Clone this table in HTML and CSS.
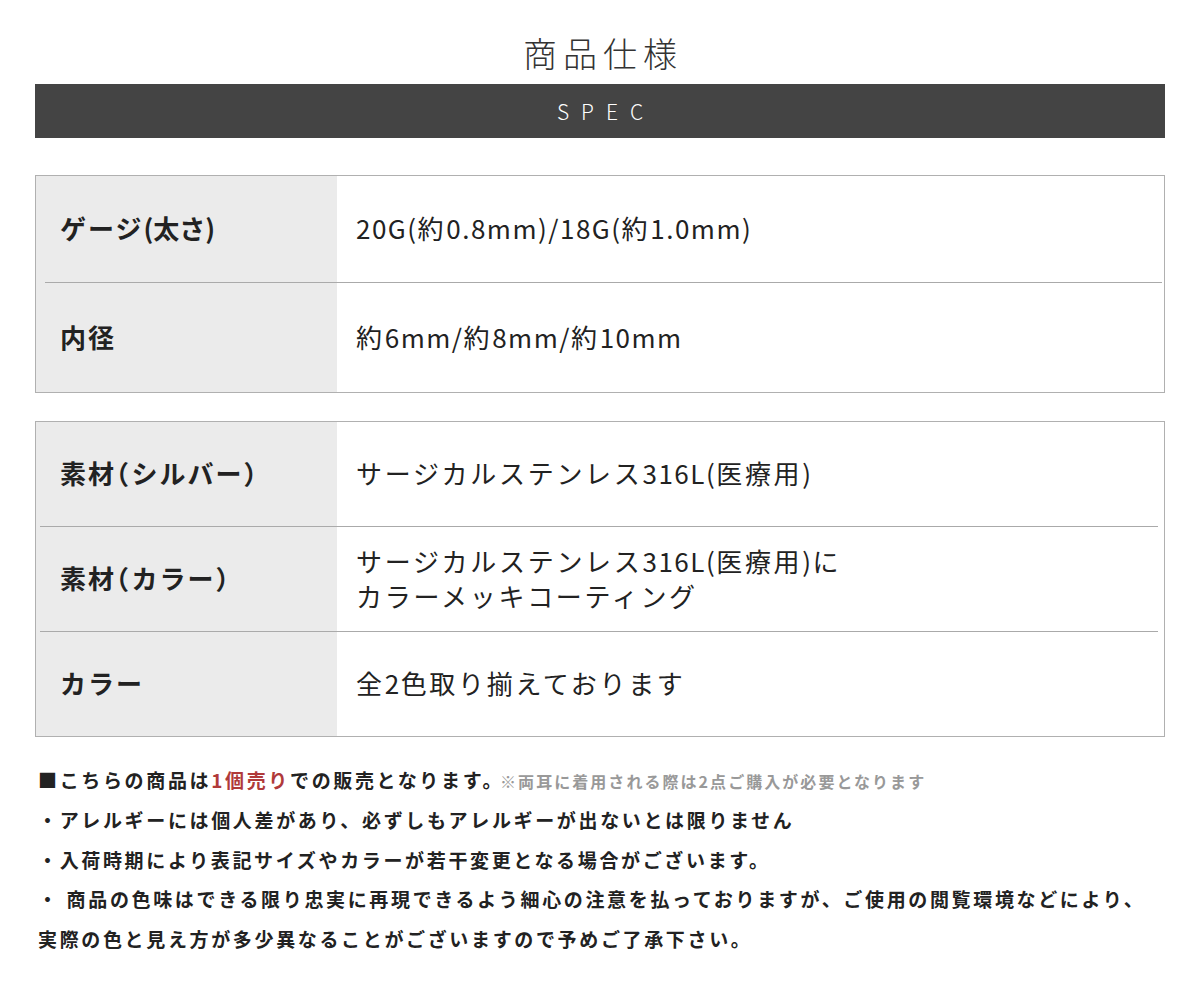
FILE: index.html
```html
<!DOCTYPE html>
<html lang="ja">
<head>
<meta charset="utf-8">
<title>商品仕様</title>
<link rel="stylesheet" href="styles.css">
</head>
<body>
<div class="page">
  <h1 class="title">商品仕様</h1>
  <div class="bar">SPEC</div>

  <div class="spec spec-a">
    <div class="row row-a1">
      <div class="label">ゲージ<span class="en">(</span><span class="tight">太さ</span><span class="en">)</span></div>
      <div class="value"><span class="en">20G(</span>約<span class="en">0.8mm)/18G(</span>約<span class="en">1.0mm)</span></div>
    </div>
    <div class="divider"></div>
    <div class="row row-a2">
      <div class="label">内径</div>
      <div class="value">約<span class="en">6mm/</span>約<span class="en">8mm/</span>約<span class="en">10mm</span></div>
    </div>
  </div>

  <div class="spec spec-b">
    <div class="row">
      <div class="label">素材<span class="paren">（</span>シルバー<span class="paren">）</span></div>
      <div class="value">サージカルステンレス<span class="en">316L(</span>医療用<span class="en">)</span></div>
    </div>
    <div class="divider"></div>
    <div class="row">
      <div class="label">素材<span class="paren">（</span>カラー<span class="paren">）</span></div>
      <div class="value value-multi">サージカルステンレス<span class="en">316L(</span>医療用<span class="en">)</span>に<br>カラーメッキコーティング</div>
    </div>
    <div class="divider"></div>
    <div class="row">
      <div class="label">カラー</div>
      <div class="value">全<span class="en">2</span>色取り揃えております</div>
    </div>
  </div>

  <div class="notes">
    <p class="note">■こちらの商品は<span class="red">1個売り</span>での販売となります。<span class="small">※両耳に着用される際は2点ご購入が必要となります</span></p>
    <p class="note">・アレルギーには個人差があり、必ずしもアレルギーが出ないとは限りません</p>
    <p class="note">・入荷時期により表記サイズやカラーが若干変更となる場合がございます。</p>
    <p class="note">・ 商品の色味はできる限り忠実に再現できるよう細心の注意を払っておりますが、ご使用の閲覧環境などにより、<br>実際の色と見え方が多少異なることがございますので予めご了承下さい。</p>
  </div>
</div>
</body>
</html>
```

FILE: styles.css
```css
* {
  box-sizing: border-box;
}

html, body {
  margin: 0;
  padding: 0;
  background: #ffffff;
}

body {
  font-family: "Noto Sans CJK JP", "Noto Sans", sans-serif;
  color: #333333;
}

.page {
  width: 1200px;
  padding: 0 35px;
}

.title {
  margin: 0 0 6px;
  padding: 28px 0 0 6px;
  line-height: 50px;
  font-size: 34px;
  font-weight: 300;
  letter-spacing: 6px;
  text-align: center;
  color: #333333;
}

.bar {
  height: 54px;
  line-height: 54px;
  background: #444444;
  color: #ffffff;
  text-align: center;
  font-size: 21px;
  font-weight: 300;
  letter-spacing: 12px;
  padding-left: 12px;
}

.spec {
  border: 1px solid #b0b0b0;
  background: linear-gradient(to right, #ebebeb 301px, #ffffff 301px);
}

.spec-a {
  margin-top: 37px;
}

.spec-b {
  margin-top: 28px;
}

.row {
  display: grid;
  grid-template-columns: 301px 1fr;
  align-items: center;
  height: 104px;
  padding-bottom: 3px;
}

.row-a1 {
  height: 106px;
}

.row-a2 {
  height: 109px;
}

.divider {
  height: 1px;
  background: #aaaaaa;
}

.spec-a .divider {
  margin: 0 2px 0 9px;
}

.spec-b .divider {
  margin: 0 6px 0 4px;
}

.label {
  padding-left: 24px;
  font-size: 26px;
  font-weight: 700;
  letter-spacing: 2px;
  color: #222222;
}

.label .en {
  letter-spacing: 0;
}

.label .tight {
  letter-spacing: 0;
}

.paren {
  font-feature-settings: "halt";
  letter-spacing: 2.5px;
}

.value {
  padding-left: 19px;
  font-size: 26px;
  font-weight: 400;
  letter-spacing: 2.7px;
  color: #222222;
}

.en {
  letter-spacing: 1.5px;
}

.value-multi {
  line-height: 35px;
}

.notes {
  margin-top: 23px;
  padding-left: 3px;
}

.note {
  margin: 0;
  font-size: 19px;
  font-weight: 700;
  line-height: 39.75px;
  letter-spacing: 2.65px;
  color: #222222;
}

.red {
  color: #b03a3a;
}

.small {
  font-size: 16px;
  line-height: 1;
  color: #999999;
  letter-spacing: 2.05px;
  margin-left: -4px;
}
```
